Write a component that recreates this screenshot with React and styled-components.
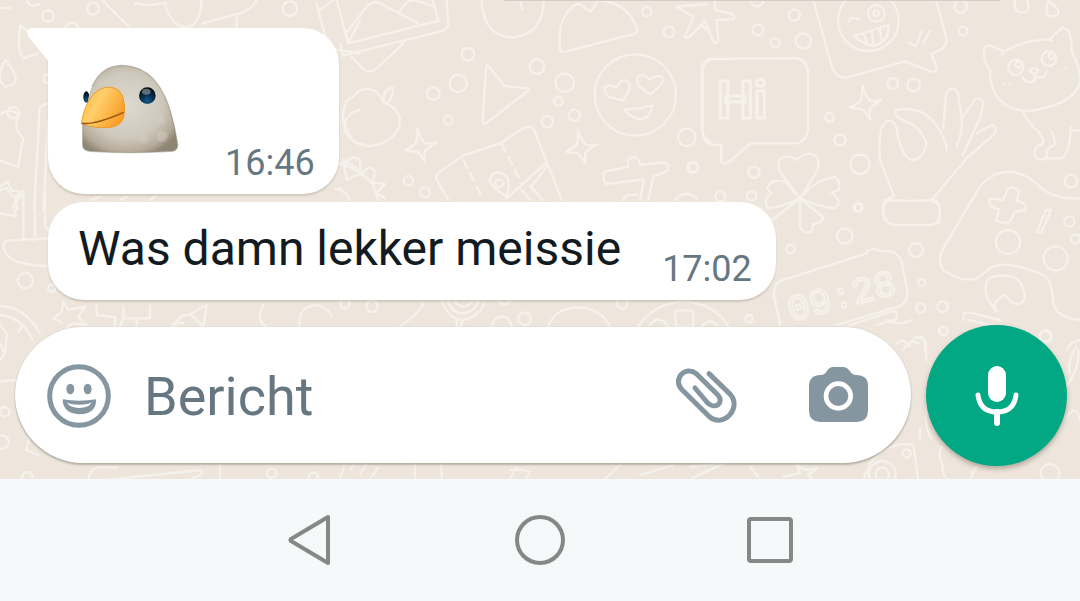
import React from "react";
import styled, { createGlobalStyle } from "styled-components";

const GlobalStyle = createGlobalStyle`
  * { box-sizing: border-box; }
  body { margin: 0; font-family: Roboto, "Liberation Sans", sans-serif; }
  button { border: 0; padding: 0; background: none; font: inherit; cursor: pointer; }
  svg { display: block; }
`;

const Screen = styled.div`
  min-height: 100vh;
  display: flex;
  flex-direction: column;
`;

const Chat = styled.main`
  position: relative;
  flex: 1;
  display: flex;
  flex-direction: column;
  justify-content: flex-end;
  gap: 25px;
  padding: 28px 13px 13px 15px;
  overflow: hidden;
  background: #eee6dd;
`;

const Backdrop = styled.svg`
  position: absolute;
  inset: 0;
  width: 100%;
  height: 100%;
`;

const Messages = styled.div`
  position: relative;
  display: flex;
  flex-direction: column;
  align-items: flex-start;
  gap: 8px;
  padding-left: 33px;
`;

const Bubble = styled.article`
  position: relative;
  display: flex;
  align-items: flex-end;
  justify-content: space-between;
  gap: ${(p) => (p.$first ? 45 : 41)}px;
  padding: ${(p) => (p.$first ? 36 : 19)}px 24px 10px 30px;
  border-radius: 36px;
  border-top-left-radius: ${(p) => (p.$first ? 0 : 36)}px;
  background: #fff;
  box-shadow: 0 2px 2px rgba(90, 80, 60, 0.2);
`;

const Tail = styled.svg`
  position: absolute;
  left: -22px;
  top: 0;
`;

const Emoji = styled.svg`
  margin-bottom: 30px;
`;

const MessageText = styled.p`
  margin: 0;
  padding-bottom: 13px;
  font-size: 48px;
  line-height: 56px;
  color: #111b21;
`;

const Time = styled.time`
  font-size: 36px;
  line-height: 42px;
  color: #667781;
`;

const Composer = styled.form`
  position: relative;
  display: flex;
  align-items: flex-start;
  gap: 15px;
`;

const InputPill = styled.div`
  flex: 1;
  min-width: 0;
  height: 136px;
  margin-top: 2px;
  display: flex;
  align-items: center;
  padding: 0 43px 0 32px;
  border-radius: 68px;
  background: #fff;
  box-shadow: 0 2px 2px rgba(70, 65, 50, 0.3), 0 0 2px rgba(70, 65, 50, 0.15);
`;

const TextInput = styled.input`
  flex: 1;
  min-width: 0;
  margin: 0 34px 0 33px;
  padding: 4px 0 0;
  border: 0;
  outline: 0;
  background: transparent;
  font: 54px/64px Roboto, "Liberation Sans", sans-serif;
  color: #111b21;
  &::placeholder { color: #667781; opacity: 1; }
`;

const IconButton = styled.button`
  flex: none;
  color: #8596a0;
  & + & { margin-left: 71px; }
`;

const MicButton = styled.button`
  flex: none;
  width: 141px;
  height: 141px;
  display: grid;
  place-items: center;
  border-radius: 50%;
  background: #02a884;
  color: #fff;
  box-shadow: 0 3px 5px rgba(70, 60, 40, 0.35);
`;

const NavBar = styled.nav`
  display: grid;
  grid-template-columns: repeat(3, 1fr);
  height: 122px;
  padding: 0 18%;
  background: #f7f8fa;
`;

const NavButton = styled.button`
  display: grid;
  place-items: center;
  color: #868787;
`;

const Dots = ({ at }) => at.map(([x, y, r]) => <circle key={`${x}-${y}`} cx={x} cy={y} r={r} />);

const Star = ({ x, y }) => (
  <path transform={`translate(${x} ${y})`} d="M-8-55 Q4-18 17-10 Q35-8 50-12 Q22 4 15 13 Q12 24 16 46 Q0 22-8 16 Q-22 14-44 10 Q-20-2-12-12 Q-8-24-8-55Z" />
);

function Wallpaper() {
  return (
    <Backdrop viewBox="0 0 1080 479" preserveAspectRatio="xMidYMid slice" aria-hidden="true">
      <g fill="none" stroke="#f6f1eb" strokeWidth="7" strokeLinecap="round" strokeLinejoin="round">
        {/* upper left */}
        <g transform="scale(.33333)">
          <Dots at={[[144, 48, 17], [279, 26, 18], [870, 26, 22], [215, 88, 20], [40, 338, 17], [145, 236, 14]]} />
          <path d="M0 24H30M80 0 Q88 28 118 12M300-10 Q330 28 385 78M405 10 Q450 20 495 8 Q510 78 560 82 Q600 80 605 0M607 70L720 40 Q760 25 770 0M710 48V80" />
          <path d="M18 180 Q-20 235 18 260 Q62 255 40 215ZM62 75 Q48 150 70 175 L115 160M62 75L100 110" />
          <path d="M0 345 Q25 320 58 345 Q35 385 70 415 Q62 445 55 500 Q20 490 0 480M140 312 Q112 315 118 350L102 630M145 360L130 630" />
          <path d="M0 560 L22 545 L35 572 L62 575 L45 600 L52 630M960 30 L1000 0M950 10L985 145L1080 160M1010 0L1045 130M1080 60L1045 130" />
          <path d="M1080 330 Q1025 345 1035 395 Q1060 435 1090 430M1030 480L1080 510M1030 480L1040 540L1080 520M1005 565 Q1040 570 1050 600" />
          <path d="M270 600L300 590M360 600L380 590M450 600L470 585" />
        </g>
        {/* left edge */}
        <g transform="translate(0 190) scale(.33333)">
          <path d="M0 0L20-5L38 20L62 18L40 48L48 78L0 70M70 0V150M105 0V150M145 145L20 152 Q0 165 22 195 Q45 225 140 228M135 0V110L145 120" />
          <Dots at={[[76, 272, 23], [155, 295, 11], [14, 665, 14], [6, 756, 20], [82, 862, 16]]} />
          <path d="M190 335L205 360L255 350L235 382L260 405L215 400L200 415M190 335L185 365L160 385L185 398" />
          <path d="M0 348 Q75 350 120 430M0 375 Q65 380 98 450M0 405L20 430L15 490L0 510M15 490L0 460M70 405L55 425M0 575L45 570M90 740L78 780L115 795M268 880 Q260 845 290 832H350M320 870L600 840 Q620 850 580 865" />
          <path d="M290 345V375L345 382V410M370 350V385H450V348M370 385L360 410M410 385V410M525 415 Q530 375 565 375L620 345L610 410L575 375M515 410Q520 390 550 400M790 345 Q765 390 800 410M900 410 Q890 350 950 345 Q985 355 995 378" />
          <Dots at={[[1035, 342, 14], [815, 850, 14], [940, 862, 14]]} />
        </g>
        {/* centre */}
        <g transform="translate(340 0) scale(.33333)">
          <path d="M5 60L25 130L295 62L278 0M18 100L80 20 Q100 0 120 10L235 70M180 32 Q205-10 240 5L285 20M320 0L325 70 Q325 90 300 95L10 166L0 130M35 170 L70 208 Q90 220 110 205L190 130" />
          <path d="M425 0 Q430 112 520 112 Q607 105 612 0M540 0L547 28M660 150 Q650 40 715 10L752 35L775 0 Q870 10 892 92 Q890 103 860 107L680 154 Q662 158 660 150M1010 20L1060 50L1035 110Q1040 120 1055 105L1085 75L1100 90M1010 20L1100 12" />
          <Dots at={[[384, 163, 19], [355, 250, 26], [280, 281, 19], [325, 361, 13], [591, 200, 22], [674, 248, 28], [655, 304, 13], [703, 346, 17], [622, 365, 17], [920, 35, 14], [987, 96, 16], [1040, 412, 26], [1060, 502, 15], [205, 542, 14], [255, 577, 15]]} />
          <path d="M445 198L493 258L565 265 Q570 270 560 276L438 370 Q428 377 428 362L438 205 Q440 195 445 198Z" />
          <path d="M128 305 C115 260 60 255 40 290 C5 300 0 370 25 395 Q35 435 90 438 Q155 430 178 380 Q190 330 128 305ZM132 305 Q125 270 158 262 Q165 290 138 310" />
          <circle cx="886" cy="285" r="122" />
          <path d="M848 302L805 290 Q780 260 812 255L830 263 Q845 230 865 245 Q877 265 848 302ZM930 283L897 258 Q880 225 910 225L930 238 Q955 220 967 233 Q975 252 930 283ZM855 328 Q895 328 936 316 Q932 357 895 357 Q865 350 855 328Z" />
          <Star x={240} y={440} /><Star x={722} y={445} />
          <path d="M325 600L288 535 Q285 525 300 515L370 466L480 430L555 382 Q575 375 583 392L665 600M500 595L620 488M545 570L570 600M570 560L610 600M620 500L575 558" />
          <path d="M370 480L425 588M485 432L545 550" strokeDasharray="26 18" />
          <path d="M500 590 Q445 555 450 535 Q462 505 495 525 Q515 540 500 590" /><circle cx="478" cy="550" r="12" />
          <path d="M0 490Q60 510 98 550L115 600M15 490 Q42 460 60 480L62 515M68 520Q90 490 105 515L98 545M100 548L135 552L110 578M110 580L135 595M0 565L25 590" />
          <path d="M795 515L865 500 Q860 470 885 472 Q900 480 900 495L970 487 Q990 490 983 512L940 530L925 600M795 515 Q785 525 797 552L912 538L900 600M850 600 Q855 580 890 585M1005 600 Q1035 565 1070 595M1110 175 Q1080 190 1085 220V390 Q1090 415 1110 425" />
        </g>
        {/* upper right */}
        <g transform="translate(690 0) scale(.33333)">
          <path d="M0 108L45 62L70 125 Q80 135 85 120L80 60 L130 58 Q140 45 120 40L75 30V0" />
          <Dots at={[[204, 90, 16], [256, 129, 14], [313, 45, 17], [340, 123, 23], [201, 0, 19], [419, 352, 13], [450, 420, 17], [510, 493, 29], [192, 517, 17], [8, 502, 16], [91, 590, 15], [185, 587, 14], [608, 250, 16], [671, 255, 19], [812, 19, 19], [819, 93, 13], [506, 622, 12], [1143, 543, 19]]} />
          <path d="M65 177L320 174 Q350 180 354 215V390 Q350 425 320 430H182L115 487 Q95 497 94 482V435H70 Q40 430 38 395V220 Q35 185 65 177Z" />
          <path d="M370 0L425 200 Q440 235 470 233L645 184L725 215 Q740 217 740 205L725 162L755 148 Q775 130 768 110L738 0" />
          <circle cx="535" cy="62" r="91" /><circle cx="559" cy="40" r="25" /><circle cx="559" cy="40" r="9" />
          <path d="M475 65 Q485 45 508 60M492 108L595 75 Q600 125 550 138 Q515 130 492 108ZM522 103L530 125M545 95L550 130M570 90L575 120M656 128L678 138L695 95M700 130L720 92" />
          <Star x={525} y={312} />
          <path d="M612 588L570 480 Q562 370 595 362 Q620 362 622 400 C635 460 650 480 670 480 Q700 475 710 430 Q690 380 650 365 Q610 350 618 332 Q645 320 690 335 Q745 360 770 440V450M760 385L768 280 Q785 255 803 275L815 350 Q820 395 800 437M820 350L855 298 Q875 290 880 310L870 355L818 465M860 400L905 375 Q925 380 915 400L830 475L727 598M585 600 Q660 605 735 600 Q755 610 747 670M585 600Q570 630 590 660" />
          <path d="M330 595L270 515 Q255 475 290 470 Q310 470 320 480 Q350 450 375 467 Q395 480 380 515ZM330 595L285 545 Q240 535 232 565L245 580 Q215 600 235 625 Q280 620 330 595ZM330 595 Q380 535 435 532 Q455 545 445 570L425 578 Q460 605 435 625 Q380 620 330 595M330 595V670M330 595L240 665" />
          <path d="M900 210 Q880 190 882 150 Q885 130 905 138L942 155 Q1000 120 1078 118L1115 84 Q1145 80 1145 155 Q1170 200 1170 235M942 155L935 165M1085 122L1078 118M900 210C900 310 970 350 1060 325 Q1160 300 1170 245M1000 340 Q1020 375 1045 395 Q1065 420 1058 432 Q1025 440 1035 470 Q1050 485 1070 475 Q1065 440 1095 435 Q1095 415 1085 395M1078 475H1110 Q1140 470 1142 380M1145 392H1170" />
          <circle cx="977" cy="202" r="23" /><circle cx="1077" cy="176" r="22" /><circle cx="985" cy="194" r="9" /><circle cx="1085" cy="168" r="9" />
          <path d="M1018 212Q1030 198 1045 210L1035 224ZM1035 224Q1040 245 1022 247Q1002 245 998 230M1040 230Q1065 240 1070 215M943 252V253M960 250V251M1115 215V216M1128 202V203M975 0Q970 35 995 38Q1025 35 1012 0M1075 0Q1060 50 1085 50Q1115 45 1100 25L1075 0" />
        </g>
        <text x="717" y="118" fontFamily="Roboto" fontWeight="700" fontSize="52" strokeWidth="3">Hi</text>
        {/* lower right */}
        <g transform="translate(760 150) scale(.33333)">
          <Dots at={[[293, 172, 12], [254, 258, 23], [91, 297, 13], [468, 300, 21], [485, 398, 11], [482, 474, 14], [548, 470, 16], [550, 543, 12], [744, 276, 36], [887, 325, 36], [928, 215, 15], [946, 267, 14], [855, 560, 17]]} />
          <path d="M120 150V230 Q130 255 155 245L160 222 Q190 220 188 200L120 145M400 140Q365 150 370 200Q380 225 410 225H510Q540 225 540 180Q535 155 515 153" />
          <path d="M60 525L42 435 Q40 395 75 388L320 310 Q315 300 345 295 Q350 305 380 303 Q415 305 425 335L442 420 Q445 455 420 468L230 525M270 525L400 482 Q420 490 405 510L350 525" />
          <path d="M550 360 Q530 335 550 295L660 110 Q715 45 790 75 Q820 90 845 115 Q890 150 960 145M550 360 Q610 400 650 385L690 355Q735 325 850 375 Q875 385 880 460 Q890 505 960 510" />
          <path d="M730 150L742 118 Q760 105 778 125L770 153 Q800 155 798 180L765 185L750 215 Q730 225 708 210L718 178 Q680 170 690 145ZM858 180H873L845 247H830ZM710 485L685 450 Q660 385 710 378 Q780 370 788 415 Q805 445 780 462 Q755 465 735 435 Q690 455 710 485M612 510 Q600 480 640 490L720 510M625 510L690 525M412 580Q430 560 450 590M450 580Q475 545 493 570L495 600M920 600Q930 575 960 570" />
          <path d="M502 750Q490 835 515 865M560 610L545 740L510 755M480 835V865M880 750Q960 680 955 600M740 850Q720 860 720 890" />
        </g>
        <text transform="translate(791 322) rotate(-15)" fontFamily="Liberation Mono" fontSize="37" strokeWidth="2">09:28</text>
        {/* strips around the input field */}
        <g transform="translate(340 295) scale(.33333)">
          <Dots at={[[15, 25, 14], [96, 34, 17], [494, 10, 18], [554, 71, 19], [847, 25, 16], [1227, 71, 11]]} />
          <path d="M250 25Q240 50 180 95M305 15Q325 75 370 75Q420 65 435 20M325 20Q335 55 370 55Q405 50 415 20M345 20Q370 50 395 20M350 75V95M370 75L360 95M455 95Q460 65 485 65Q510 65 515 95M625 95Q645 38 715 38Q780 38 810 95M895 95Q940 25 1030 20Q1125 25 1165 95M1005 50Q1030 40 1060 50V95H1008ZM930 90Q955 55 985 95M1085 95Q1110 65 1130 90M1300 0L1320 80" />
        </g>
        <g transform="translate(640 320) scale(.33333)">
          <path d="M740 0Q780 20 815 0M790 90Q810 55 835 70M830 55Q855 45 858 75V120M0 465L100 435M150 440L250 430L155 475M330 440L355 470M430 470L480 460L470 435L495 450L530 445L505 465L520 480M670 480L690 430Q750 360 820 375L835 480M910 440Q890 400 905 380M905 430Q910 480 930 480M990 480Q1000 450 1010 440M1280 290Q1310 250 1320 300M1290 160Q1280 120 1310 80" />
          <circle cx="727" cy="463" r="40" /><Dots at={[[727, 463, 20], [800, 400, 12], [910, 32, 13], [1218, 48, 18], [1230, 460, 28]]} />
        </g>
        <path strokeWidth="2" d="M220 465V479M340 479L345 463M350 470L356 462M360 475L366 464M370 479L378 468M415 479V464M442 479L441 464M510 470H520M510 479L516 468L530 472L526 479M605 479L622 463" />
      </g>
      <path d="M504 0H1000" stroke="#d5cec6" strokeWidth="2" />
    </Backdrop>
  );
}

function BirdEmoji() {
  return (
    <Emoji width="102" height="90" viewBox="24 28 306 270" role="img" aria-label="Bird">
      <defs>
        <radialGradient id="head" cx=".46" cy=".46" r=".62">
          <stop offset="0" stopColor="#dedad0" />
          <stop offset=".6" stopColor="#cfc9bd" />
          <stop offset=".86" stopColor="#b5ab9b" />
          <stop offset="1" stopColor="#8f8573" />
        </radialGradient>
        <linearGradient id="beak" x1="0" y1="0" x2="1" y2=".5">
          <stop offset="0" stopColor="#ffb42f" />
          <stop offset=".45" stopColor="#ffcf6c" />
          <stop offset="1" stopColor="#f8a02a" />
        </linearGradient>
        <radialGradient id="eye" cx=".5" cy=".82" r=".8">
          <stop offset="0" stopColor="#125b8c" />
          <stop offset=".5" stopColor="#082b48" />
          <stop offset="1" stopColor="#05090f" />
        </radialGradient>
      </defs>
      <ellipse cx="49" cy="127" rx="9" ry="17" fill="url(#eye)" />
      <path d="M38 272V205C54 175 50 125 66 96C84 54 116 33 155 32C215 34 254 63 283 122C306 170 315 220 323 270Q323 289 302 290Q180 298 60 290Q39 288 38 272Z" fill="url(#head)" />
      <path d="M66 96C84 54 116 33 155 32C215 34 254 63 283 122C306 170 315 220 323 270Q323 289 302 290Q180 298 60 290Q39 288 38 272V205" fill="none" stroke="#91897b" strokeWidth="4" opacity=".45" />
      <circle cx="221" cy="254" r="14" fill="#dcd8ce" opacity=".3" />
      <circle cx="276" cy="245" r="17" fill="#dcd8ce" opacity=".35" />
      <circle cx="274" cy="198" r="12" fill="#dcd8ce" opacity=".3" />
      <path d="M35 206C38 170 60 108 104 99Q142 92 157 122Q168 150 162 184Q156 213 122 218Q72 223 35 206Z" fill="url(#beak)" stroke="#ef9b28" strokeWidth="3" />
      <path d="M35 206Q75 211 161 173" fill="none" stroke="#965010" strokeWidth="4" />
      <circle cx="232" cy="123" r="25" fill="url(#eye)" />
      <ellipse cx="229" cy="111" rx="13" ry="9" fill="#b7bec3" opacity=".5" />
    </Emoji>
  );
}

export default function App() {
  return (
    <Screen>
      <GlobalStyle />
      <Chat>
        <Wallpaper />
        <Messages>
          <Bubble $first>
            <Tail width="23" height="34" viewBox="0 0 23 34" aria-hidden="true">
              <path d="M23 0H5Q-1 1 2 8L23 34Z" fill="#fff" />
            </Tail>
            <BirdEmoji />
            <Time dateTime="16:46">16:46</Time>
          </Bubble>
          <Bubble>
            <MessageText>Was damn lekker meissie</MessageText>
            <Time dateTime="17:02">17:02</Time>
          </Bubble>
        </Messages>
        <Composer onSubmit={(e) => e.preventDefault()}>
          <InputPill>
            <IconButton type="button" aria-label="Emoji">
              <svg width="64" height="66" viewBox="140 216 192 198" fill="currentColor">
                <circle cx="236" cy="318" r="88" fill="none" stroke="currentColor" strokeWidth="15" />
                <ellipse cx="210" cy="297" rx="12" ry="16" />
                <ellipse cx="262" cy="297" rx="12" ry="16" />
                <path fillRule="evenodd" d="M187 328Q236 336 287 328Q289 372 237 373Q187 370 187 328ZM199 337Q208 344 236 344Q265 344 275 337Q265 354 237 354Q209 354 199 337Z" />
              </svg>
            </IconButton>
            <TextInput type="text" aria-label="Bericht" placeholder="Bericht" />
            <IconButton type="button" aria-label="Attach">
              <svg width="64" height="62" viewBox="102 132 192 186" fill="none" stroke="currentColor" strokeWidth="15" strokeLinecap="round" strokeLinejoin="round">
                <path d="M207 161L271 223C306 263 252 325 209 291L124 207C98 176 136 135 169 161L233 224C255 248 225 270 203 249L165 204" />
              </svg>
            </IconButton>
            <IconButton type="button" aria-label="Camera">
              <svg width="59" height="57" viewBox="507 138 177 171" fill="currentColor">
                <path fillRule="evenodd" d="M580 138H611Q621 139 629 149Q637 162 649 162Q684 163 684 194V270Q683 302 651 303H540Q508 302 507 270V194Q508 162 542 162Q554 162 561 149Q568 139 580 138ZM595 181A44 44 0 1 0 595 269A44 44 0 1 0 595 181Z" />
                <circle cx="595" cy="225" r="30" />
              </svg>
            </IconButton>
          </InputPill>
          <MicButton type="button" aria-label="Record voice message">
            <svg width="46" height="62" viewBox="0 0 46 62" fill="none" stroke="currentColor" strokeLinecap="round">
              <rect x="14" y="1" width="18" height="36" rx="9" fill="currentColor" stroke="none" />
              <path d="M4 30Q6 47 23 47Q40 47 42 30" strokeWidth="5" />
              <path d="M23 47V58" strokeWidth="6" />
            </svg>
          </MicButton>
        </Composer>
      </Chat>
      <NavBar aria-label="System navigation">
        <NavButton type="button" aria-label="Back">
          <svg width="44" height="52" viewBox="0 0 44 52" fill="none" stroke="currentColor" strokeWidth="4" strokeLinejoin="round">
            <path d="M40 3V49L3 27Q2 26 3 25Z" />
          </svg>
        </NavButton>
        <NavButton type="button" aria-label="Home">
          <svg width="50" height="50" viewBox="0 0 50 50" fill="none" stroke="currentColor" strokeWidth="4">
            <circle cx="25" cy="25" r="23" />
          </svg>
        </NavButton>
        <NavButton type="button" aria-label="Recent apps">
          <svg width="46" height="46" viewBox="0 0 46 46" fill="none" stroke="currentColor" strokeWidth="4">
            <rect x="2" y="2" width="42" height="42" rx="2" />
          </svg>
        </NavButton>
      </NavBar>
    </Screen>
  );
}
